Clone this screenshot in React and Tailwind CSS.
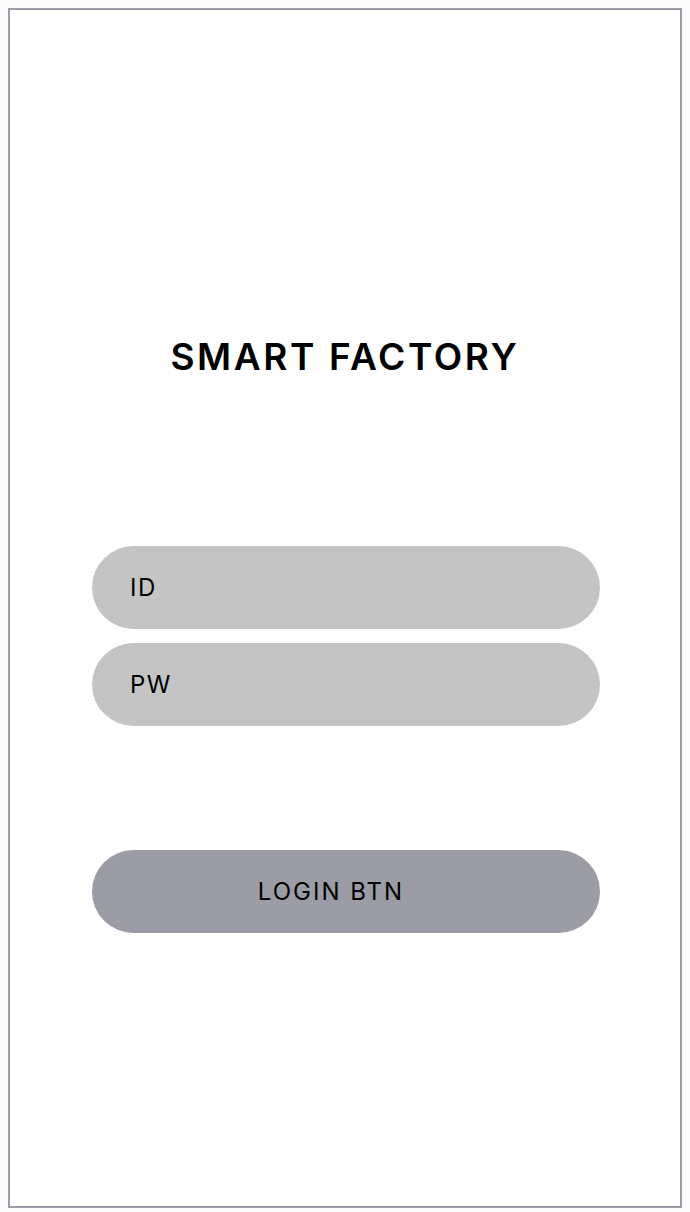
import React from 'react';

const font = { fontFamily: 'Inter, "Open Sans", sans-serif' };

export default function App() {
  return (
    <div className="min-h-screen bg-[#fbfbfb] p-2" style={font}>
      <div className="flex h-[1200px] w-[674px] flex-col border-2 border-[#9b9ca6] bg-white">
        <h1 className="mt-[328px] text-center text-[37px] leading-none font-semibold tracking-[2.6px] text-black">
          SMART FACTORY
        </h1>

        <div className="ml-[82px] mt-[171px] flex w-[508px] flex-col gap-[14px]">
          <div className="flex h-[83px] items-center rounded-full bg-[#c4c4c4] pl-[38px] text-[24px] tracking-[1.5px] text-black">
            ID
          </div>
          <div className="flex h-[83px] items-center rounded-full bg-[#c4c4c4] pl-[38px] text-[24px] tracking-[1.5px] text-black">
            PW
          </div>
          <button className="mt-[110px] flex h-[83px] items-center justify-center rounded-full bg-[#9b9ca6] pr-[30px] text-[24px] tracking-[2px] text-black">
            LOGIN BTN
          </button>
        </div>
      </div>
    </div>
  );
}
